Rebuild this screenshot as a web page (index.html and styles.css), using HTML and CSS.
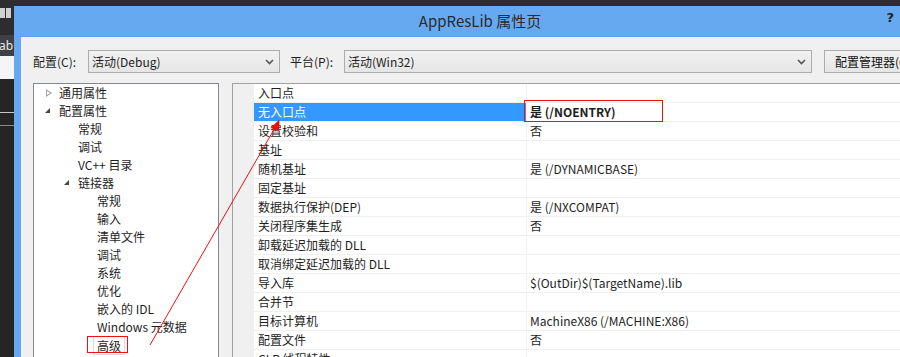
FILE: index.html
```html
<!DOCTYPE html>
<html lang="zh-CN">

<head>
    <meta charset="UTF-8">
    <title>AppResLib 属性页</title>
    <link rel="stylesheet" href="styles.css">
</head>

<body>
    <div class="screen">
        <div class="side">
            <div class="side_icon"><span></span><span></span></div>
            <div class="side_tab">ab</div>
            <div class="side_white"></div>
            <div class="side_line"></div>
            <div class="side_line"></div>
        </div>

        <div class="dialog">
            <div class="titlebar">
                <span class="title">AppResLib 属性页</span>
                <span class="help">?</span>
            </div>

            <div class="client">
                <div class="toolbar">
                    <label class="lbl lbl_cfg">配置(C):</label>
                    <div class="combo combo_cfg">
                        <span>活动(Debug)</span>
                        <svg class="chev" width="9" height="6" viewBox="0 0 9 6"><polyline points="1,1 4.5,4.5 8,1" /></svg>
                    </div>
                    <label class="lbl lbl_plat">平台(P):</label>
                    <div class="combo combo_plat">
                        <span>活动(Win32)</span>
                        <svg class="chev" width="9" height="6" viewBox="0 0 9 6"><polyline points="1,1 4.5,4.5 8,1" /></svg>
                    </div>
                    <button class="btn">配置管理器(O)...</button>
                </div>

                <div class="panels">
                    <ul class="tree">
                        <li class="lv0"><i class="tri_open"></i>通用属性</li>
                        <li class="lv0"><i class="tri_down"></i>配置属性</li>
                        <li class="lv1"><i></i>常规</li>
                        <li class="lv1"><i></i>调试</li>
                        <li class="lv1"><i></i>VC++ 目录</li>
                        <li class="lv1"><i class="tri_down"></i>链接器</li>
                        <li class="lv2"><i></i>常规</li>
                        <li class="lv2"><i></i>输入</li>
                        <li class="lv2"><i></i>清单文件</li>
                        <li class="lv2"><i></i>调试</li>
                        <li class="lv2"><i></i>系统</li>
                        <li class="lv2"><i></i>优化</li>
                        <li class="lv2"><i></i>嵌入的 IDL</li>
                        <li class="lv2"><i></i>Windows 元数据</li>
                        <li class="lv2"><i></i><span class="current">高级</span></li>
                    </ul>

                    <div class="grid">
                        <div class="gutter"></div>
                        <div class="rows">
                            <div class="row"><div class="name">入口点</div><div class="val"></div></div>
                            <div class="row selected"><div class="name">无入口点</div><div class="val bold">是 (/NOENTRY)</div></div>
                            <div class="row"><div class="name">设置校验和</div><div class="val">否</div></div>
                            <div class="row"><div class="name">基址</div><div class="val"></div></div>
                            <div class="row"><div class="name">随机基址</div><div class="val">是 (/DYNAMICBASE)</div></div>
                            <div class="row"><div class="name">固定基址</div><div class="val"></div></div>
                            <div class="row"><div class="name">数据执行保护(DEP)</div><div class="val">是 (/NXCOMPAT)</div></div>
                            <div class="row"><div class="name">关闭程序集生成</div><div class="val">否</div></div>
                            <div class="row"><div class="name">卸载延迟加载的 DLL</div><div class="val"></div></div>
                            <div class="row"><div class="name">取消绑定延迟加载的 DLL</div><div class="val"></div></div>
                            <div class="row"><div class="name">导入库</div><div class="val">$(OutDir)$(TargetName).lib</div></div>
                            <div class="row"><div class="name">合并节</div><div class="val"></div></div>
                            <div class="row"><div class="name">目标计算机</div><div class="val">MachineX86 (/MACHINE:X86)</div></div>
                            <div class="row"><div class="name">配置文件</div><div class="val">否</div></div>
                            <div class="row"><div class="name">CLR 线程特性</div><div class="val"></div></div>
                        </div>
                    </div>
                </div>
            </div>
        </div>

        <!-- red annotation drawn over the screenshot -->
        <svg class="marks" width="900" height="357" viewBox="0 0 900 357">
            <rect x="524.5" y="100.5" width="138" height="21" />
            <rect x="87.5" y="336.5" width="40" height="16" />
            <line x1="150" y1="345" x2="276" y2="126" />
            <polygon points="279.5,119.5 270.5,128 279,131" />
        </svg>
    </div>
</body>

</html>
```

FILE: styles.css
```css
* {
    box-sizing: border-box;
    margin: 0;
    padding: 0;
}

body {
    background: #2d2d30;
    font-family: "Noto Sans CJK SC", "Noto Sans", sans-serif;
    font-size: 12px;
    color: #1e1e1e;
}

.screen {
    position: relative;
    display: flex;
    width: 900px;
    height: 357px;
    overflow: hidden;
    background: #2d2d30;
}

/* left editor strip */
.side {
    width: 14px;
    flex: none;
    display: flex;
    flex-flow: column;
    background: #252526;
}

.side_icon {
    height: 35px;
    background: #2d2d30;
    padding: 8px 0 0 0;
    display: flex;
    gap: 1px;
}

.side_icon span {
    display: block;
    width: 5px;
    height: 10px;
    background: #d0d0d0;
}

.side_tab {
    height: 21px;
    background: #3f3f46;
    color: #e8e8e8;
    font-family: "Noto Sans", sans-serif;
    font-size: 12px;
    line-height: 21px;
    text-indent: -1px;
}

.side_white {
    height: 23px;
    background: #f5f5f5;
}

.side_line {
    height: 1px;
    background: #c8c8c8;
    margin-top: 33px;
}

.side_line + .side_line {
    margin-top: 12px;
    background: #8a8a8a;
}

/* dialog window */
.dialog {
    flex: 1;
    min-width: 0;
    margin-top: 6px;
    display: flex;
    flex-flow: column;
    background: #67a9f1;
}

.titlebar {
    height: 30px;
    flex: none;
    display: flex;
    align-items: center;
    justify-content: center;
    position: relative;
}

.title {
    font-size: 15px;
    color: #2b2b2b;
    margin-left: 46px;
    margin-top: -2px;
}

.help {
    position: absolute;
    right: 6px;
    top: 4px;
    font-family: "DejaVu Sans", sans-serif;
    font-weight: bold;
    font-size: 13px;
    color: #222;
}

.client {
    flex: 1;
    min-width: 0;
    margin-left: 7px;
    background: #f0f0f0;
    border-top: 1px solid #5e9de6;
    padding: 13px 0 0 12px;
    display: flex;
    flex-flow: column;
    overflow: hidden;
}

/* config row */
.toolbar {
    display: flex;
    align-items: center;
    height: 23px;
    white-space: nowrap;
}

.lbl {
    flex: none;
    color: #1e1e1e;
    line-height: 23px;
}

.lbl_cfg {
    width: 55px;
}

.lbl_plat {
    width: 54px;
    margin-left: 10px;
}

.combo {
    flex: none;
    height: 23px;
    border: 1px solid #acacac;
    background: linear-gradient(#f2f2f2, #e5e5e5);
    display: flex;
    align-items: center;
    justify-content: space-between;
    padding: 0 5px 0 3px;
}

.combo_cfg {
    width: 192px;
}

.combo_plat {
    width: 468px;
}

.chev polyline {
    fill: none;
    stroke: #555;
    stroke-width: 1.6;
}

.btn {
    flex: none;
    height: 23px;
    width: 130px;
    margin-left: 12px;
    padding: 0 0 0 10px;
    border: 1px solid #acacac;
    background: linear-gradient(#f2f2f2, #e5e5e5);
    font: inherit;
    color: #111;
    text-align: left;
}

/* panels */
.panels {
    display: flex;
    gap: 13px;
    margin-top: 10px;
    flex: 1;
    min-height: 0;
}

.tree {
    list-style: none;
    width: 186px;
    flex: none;
    background: #fff;
    border: 1px solid #828790;
    border-bottom: none;
}

.tree li {
    height: 18px;
    line-height: 18px;
    display: flex;
    align-items: center;
    white-space: nowrap;
}

.tree i {
    width: 15px;
    height: 18px;
    flex: none;
    position: relative;
}

.lv0 i {
    margin-left: 10px;
}

.lv1 i {
    margin-left: 29px;
}

.lv2 i {
    margin-left: 48px;
}

.tri_open::after {
    content: "";
    position: absolute;
    left: 2px;
    top: 5px;
    border-left: 6px solid #a6a6a6;
    border-top: 4px solid transparent;
    border-bottom: 4px solid transparent;
}

.tri_open::before {
    content: "";
    position: absolute;
    left: 3px;
    top: 7px;
    border-left: 3px solid #fff;
    border-top: 2px solid transparent;
    border-bottom: 2px solid transparent;
    z-index: 1;
}

.tri_down::after {
    content: "";
    position: absolute;
    left: 1px;
    top: 6px;
    border-right: 5px solid #444;
    border-top: 5px solid transparent;
}

.current {
    border: 1px solid #dadada;
    padding: 0 3px;
    margin-left: -4px;
    line-height: 17px;
}

.grid {
    flex: 1;
    min-width: 0;
    display: flex;
    background: #fff;
    border-top: 1px solid #a0a0a0;
    border-left: 1px solid #a0a0a0;
}

.gutter {
    width: 21px;
    flex: none;
    background: #f0f0f0;
}

.rows {
    flex: 1;
}

.row {
    display: flex;
    height: 19px;
    border-bottom: 1px solid #f0f0f0;
    line-height: 18px;
    white-space: nowrap;
}

.name {
    width: 273px;
    flex: none;
    padding-left: 4px;
    border-right: 1px solid #f0f0f0;
}

.val {
    flex: 1;
    padding-left: 3px;
}

.bold {
    font-weight: bold;
}

.selected .name {
    background: #3399ff;
    color: #fff;
}

/* annotation overlay */
.marks {
    position: absolute;
    left: 0;
    top: 0;
    pointer-events: none;
}

.marks rect {
    fill: none;
    stroke: #ee1111;
    stroke-width: 1;
}

.marks line {
    stroke: #ee1111;
    stroke-width: 1;
}

.marks polygon {
    fill: #ee1111;
}
```
